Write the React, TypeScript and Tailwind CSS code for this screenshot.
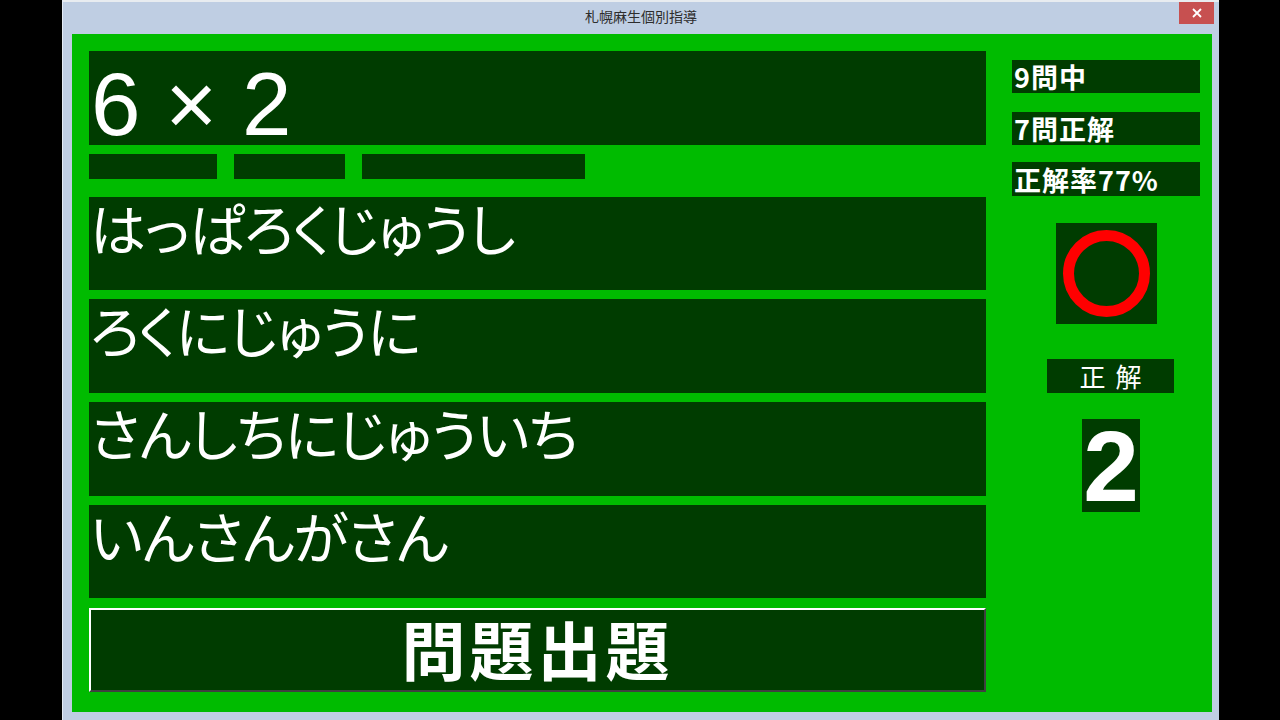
import React from 'react';

const jp = { fontFamily: '"Noto Sans CJK JP", "Noto Sans", sans-serif' };

const answers = ['はっぱろくじゅうし', 'ろくにじゅうに', 'さんしちにじゅういち', 'いんさんがさん'];
const answerHeights = ['h-[93px] mt-[18px]', 'h-[94px] mt-[9px]', 'h-[94px] mt-[9px]', 'h-[93px] mt-[9px]'];

function Stat({ text, cls }: { text: string; cls: string }) {
  return (
    <div className={`w-[188px] bg-[#003c00] flex items-center pl-[2px] text-white font-bold text-[27px] tracking-[1px] leading-none ${cls}`} style={jp}>
      {text}
    </div>
  );
}

export default function App() {
  return (
    <div className="w-[1280px] h-[720px] bg-black flex overflow-hidden">
      <div className="w-[62px] shrink-0" />
      <div className="w-[1157px] h-[720px] bg-[#bfcee3] border-l border-[#e4ebf4] flex flex-col">
        {/* title bar */}
        <div className="h-[34px] shrink-0 relative flex items-center justify-center border-t-2 border-[#e8ecf0]">
          <span className="text-[14px] text-[#2d2d2d] -mt-[3px]" style={jp}>札幌麻生個別指導</span>
          <div className="absolute right-[5px] top-0 w-[35px] h-[22px] bg-[#c75050] flex items-center justify-center">
            <svg width="10" height="10" viewBox="0 0 10 10">
              <path d="M1 1L9 9M9 1L1 9" stroke="white" strokeWidth="1.8" />
            </svg>
          </div>
        </div>

        {/* client area */}
        <div className="ml-[9px] mr-[7px] h-[678px] bg-[#00bb00] flex">
          <div className="w-[897px] ml-[17px] pt-[17px] flex flex-col">
            <div className="h-[94px] bg-[#003c00] pl-[2px] pt-[9px] text-white text-[89px] leading-none" style={{ fontFamily: '"Liberation Sans", Arial, sans-serif' }}>
              6 × 2
            </div>
            <div className="h-[25px] mt-[9px] flex gap-[17px]">
              <div className="w-[128px] bg-[#003c00]" />
              <div className="w-[111px] bg-[#003c00]" />
              <div className="w-[223px] bg-[#003c00]" />
            </div>
            {answers.map((a, i) => (
              <div key={a} className={`${answerHeights[i]} bg-[#003c00] pl-[1px] pt-[2px] text-white text-[56px] leading-none tracking-[-1px]`} style={{ ...jp, fontFeatureSettings: '"palt"' }}>
                {a}
              </div>
            ))}
            <div className="h-[84px] mt-[10px] bg-[#003c00] border-2 border-t-white border-l-white border-b-[#404040] border-r-[#404040] flex items-center justify-center">
              <span className="text-white font-bold text-[64px] leading-none tracking-[4px] -mt-[6px]" style={jp}>問題出題</span>
            </div>
          </div>

          <div className="ml-[26px] pt-[26px] flex flex-col items-start">
            <Stat text="9問中" cls="h-[33px]" />
            <Stat text="7問正解" cls="h-[33px] mt-[19px]" />
            <Stat text="正解率77%" cls="h-[34px] mt-[17px]" />
            <div className="ml-[44px] mt-[27px] w-[101px] h-[101px] bg-[#003c00] flex items-center justify-center">
              <svg width="101" height="101" viewBox="0 0 101 101">
                <circle cx="50.5" cy="50.5" r="38" fill="none" stroke="#ff0000" strokeWidth="11" />
              </svg>
            </div>
            <div className="ml-[35px] mt-[35px] w-[127px] h-[34px] bg-[#003c00] flex items-center justify-center text-white text-[26px] leading-none tracking-[10px] pl-[10px]" style={jp}>
              正解
            </div>
            <div className="ml-[70px] mt-[26px] w-[58px] h-[93px] bg-[#003c00] flex items-center justify-center text-white font-bold text-[100px] leading-none" style={{ fontFamily: '"Liberation Sans", Arial, sans-serif' }}>
              2
            </div>
          </div>
        </div>
      </div>
    </div>
  );
}
